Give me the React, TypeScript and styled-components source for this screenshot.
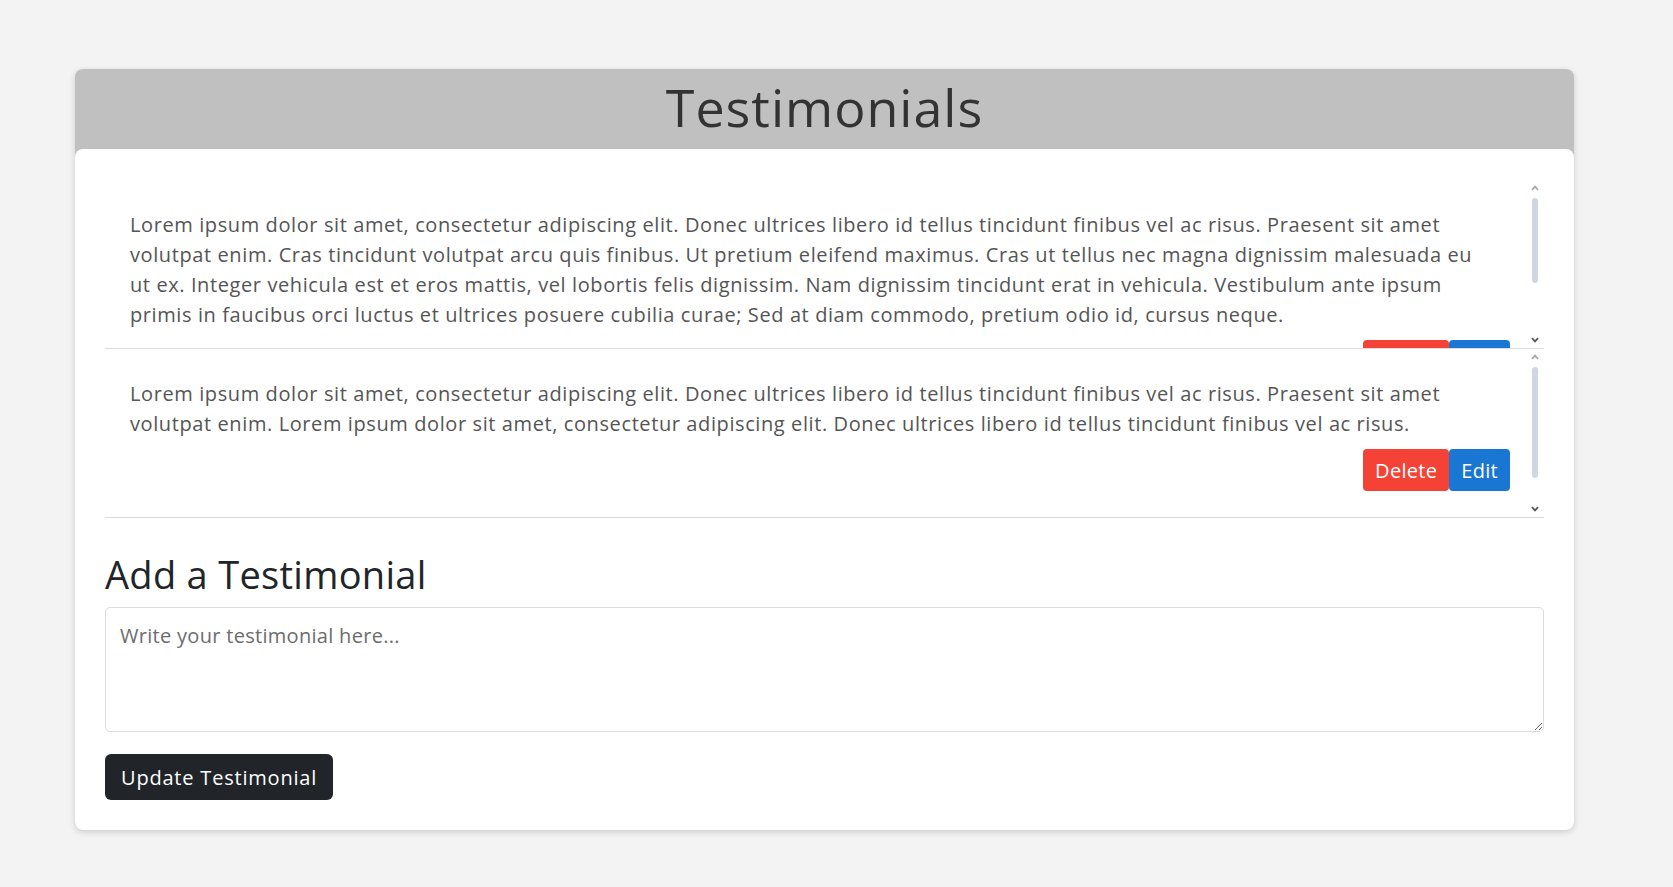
import React, { useLayoutEffect, useRef, useState } from "react";
import styled, { createGlobalStyle } from "styled-components";

const GlobalStyle = createGlobalStyle`
  * { box-sizing: border-box; }
  html, body {
    margin: 0;
    padding: 0;
    background: #f3f3f3;
    font-family: "Open Sans", "Liberation Sans", sans-serif;
  }
`;

const Page = styled.div`
  padding: 69px 0 58px 75px;
`;

const Card = styled.div`
  width: 1499px;
  background: #c0c0c0;
  border-radius: 8px;
  box-shadow: 0 2px 6px rgba(0, 0, 0, 0.16);
`;

const Header = styled.header`
  height: 80px;
  display: flex;
  align-items: center;
  justify-content: center;
`;

const Title = styled.h1`
  margin: 0 0 6px;
  font-size: 52px;
  font-weight: 500;
  letter-spacing: 1px;
  color: #333;
`;

const Body = styled.div`
  background: #fff;
  border-radius: 8px;
  padding: 31px 30px 30px;
`;

const List = styled.div`
  display: flex;
  flex-direction: column;
`;

const ItemFrame = styled.div`
  position: relative;
  height: 169px;
  border-bottom: 1px solid #dcdcdc;
`;

const Scroller = styled.div`
  height: 100%;
  overflow-y: auto;
  padding: 30px 34px 58px 25px;
  scrollbar-width: none;
  &::-webkit-scrollbar {
    display: none;
  }
`;

const Track = styled.div`
  position: absolute;
  top: 0;
  right: 0;
  bottom: 0;
  width: 16px;
  padding-left: 2px;
  display: flex;
  flex-direction: column;
  align-items: flex-start;
  pointer-events: none;
`;

const Arrow = styled.div`
  width: 9px;
  height: 16px;
  display: flex;
  align-items: center;
  justify-content: center;
`;

const ThumbArea = styled.div`
  flex: 1;
  width: 9px;
  padding: 2px 0;
  display: flex;
  justify-content: center;
`;

const Thumb = styled.div`
  width: 6px;
  border-radius: 3px;
  background: #cfd8e2;
`;

const Text = styled.p`
  margin: 0 20px 0 0;
  font-size: 20px;
  line-height: 30px;
  letter-spacing: 0.6px;
  color: #555;
`;

const Actions = styled.div`
  display: flex;
  justify-content: flex-end;
  margin-top: 10px;
`;

const ActionButton = styled.button<{ $tone: "danger" | "primary" }>`
  height: 42px;
  padding: 0 12px;
  border: none;
  border-radius: 4px;
  font-family: inherit;
  font-size: 20px;
  letter-spacing: 0.3px;
  color: #fff;
  cursor: pointer;
  background: ${(p) => (p.$tone === "danger" ? "#f44336" : "#1976d2")};
`;

const SubHeading = styled.h2`
  margin: 33px 0 10px;
  font-size: 38px;
  font-weight: 500;
  line-height: 46px;
  letter-spacing: 0.3px;
  color: #212529;
`;

const TextArea = styled.textarea`
  display: block;
  width: 100%;
  height: 125px;
  padding: 14px 14px;
  border: 1px solid #dcdcdc;
  border-radius: 5px;
  font-family: inherit;
  font-size: 20px;
  letter-spacing: 0.3px;
  color: #333;
  resize: vertical;
  &::placeholder {
    color: #6c6c6c;
  }
`;

const SubmitButton = styled.button`
  margin-top: 22px;
  height: 46px;
  padding: 0 16px;
  border: none;
  border-radius: 6px;
  background: #212529;
  color: #fff;
  font-family: inherit;
  font-size: 20px;
  letter-spacing: 0.8px;
  cursor: pointer;
`;

const Chevron = ({ dir, active }: { dir: "up" | "down"; active: boolean }) => (
  <svg width="8" height="6" viewBox="0 0 8 6" aria-hidden="true">
    <path
      d={dir === "up" ? "M1 4.8 L4 1.6 L7 4.8" : "M1 1.2 L4 4.4 L7 1.2"}
      fill="none"
      stroke={active ? "#555" : "#a8a8a8"}
      strokeWidth="1.7"
    />
  </svg>
);

function TestimonialItem({ text }: { text: string }) {
  const ref = useRef<HTMLDivElement>(null);
  const [metrics, setMetrics] = useState({ ratio: 1, offset: 0, top: 0, max: 0 });

  const measure = () => {
    const el = ref.current;
    if (!el) return;
    const max = el.scrollHeight - el.clientHeight;
    setMetrics({
      ratio: el.clientHeight / el.scrollHeight,
      offset: max > 0 ? el.scrollTop / el.scrollHeight : 0,
      top: el.scrollTop,
      max,
    });
  };

  useLayoutEffect(measure, []);

  return (
    <ItemFrame>
      <Scroller ref={ref} onScroll={measure}>
        <Text>{text}</Text>
        <Actions>
          <ActionButton $tone="danger">Delete</ActionButton>
          <ActionButton $tone="primary">Edit</ActionButton>
        </Actions>
      </Scroller>
      <Track aria-hidden="true">
        <Arrow>
          <Chevron dir="up" active={metrics.top > 0} />
        </Arrow>
        <ThumbArea>
          <Thumb
            style={{
              height: `${metrics.ratio * 100}%`,
              marginTop: `${metrics.offset * 100}%`,
            }}
          />
        </ThumbArea>
        <Arrow>
          <Chevron dir="down" active={metrics.top < metrics.max} />
        </Arrow>
      </Track>
    </ItemFrame>
  );
}

const testimonials = [
  "Lorem ipsum dolor sit amet, consectetur adipiscing elit. Donec ultrices libero id tellus tincidunt finibus vel ac risus. Praesent sit amet volutpat enim. Cras tincidunt volutpat arcu quis finibus. Ut pretium eleifend maximus. Cras ut tellus nec magna dignissim malesuada eu ut ex. Integer vehicula est et eros mattis, vel lobortis felis dignissim. Nam dignissim tincidunt erat in vehicula. Vestibulum ante ipsum primis in faucibus orci luctus et ultrices posuere cubilia curae; Sed at diam commodo, pretium odio id, cursus neque.",
  "Lorem ipsum dolor sit amet, consectetur adipiscing elit. Donec ultrices libero id tellus tincidunt finibus vel ac risus. Praesent sit amet volutpat enim. Lorem ipsum dolor sit amet, consectetur adipiscing elit. Donec ultrices libero id tellus tincidunt finibus vel ac risus.",
];

export default function App() {
  return (
    <>
      <GlobalStyle />
      <Page>
        <Card>
          <Header>
            <Title>Testimonials</Title>
          </Header>
          <Body>
            <List>
              {testimonials.map((t, i) => (
                <TestimonialItem key={i} text={t} />
              ))}
            </List>
            <SubHeading>Add a Testimonial</SubHeading>
            <TextArea placeholder="Write your testimonial here..." />
            <SubmitButton>Update Testimonial</SubmitButton>
          </Body>
        </Card>
      </Page>
    </>
  );
}
